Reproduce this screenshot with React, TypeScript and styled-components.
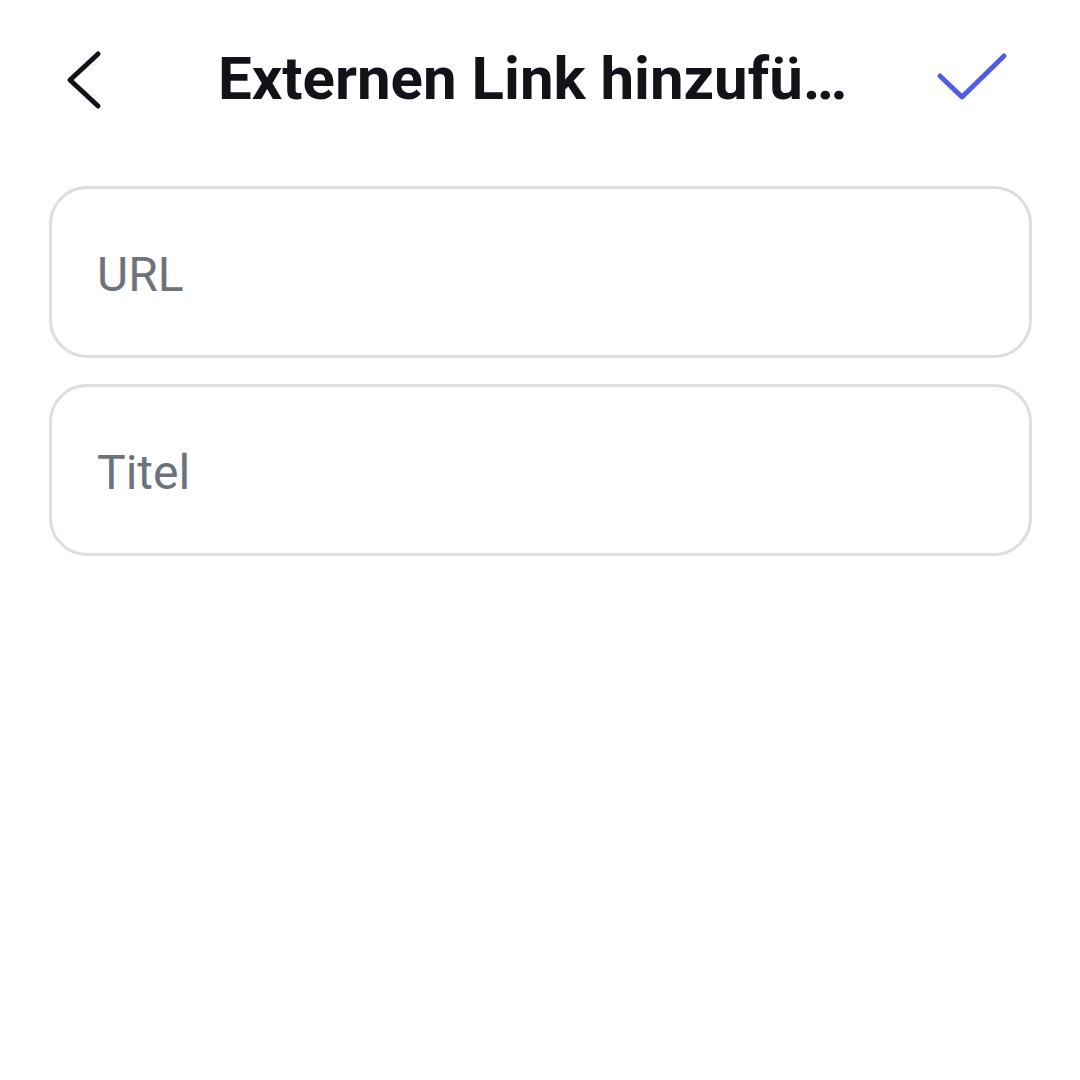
import styled, { createGlobalStyle } from "styled-components";

const Global = createGlobalStyle`
  html, body {
    margin: 0;
    padding: 0;
    background: #ffffff;
  }
  body {
    font-family: Roboto, "Liberation Sans", Arial, sans-serif;
  }
`;

const Screen = styled.div`
  width: 1080px;
  height: 1080px;
  background: #ffffff;
  display: flex;
  flex-direction: column;
`;

const Header = styled.header`
  height: 156px;
  display: grid;
  grid-template-columns: 218px 1fr 218px;
  align-items: center;
`;

const IconButton = styled.button<{ $align: "start" | "end" }>`
  border: none;
  background: none;
  padding: 0;
  display: flex;
  justify-content: ${(p) => (p.$align === "start" ? "flex-start" : "flex-end")};
  padding-left: ${(p) => (p.$align === "start" ? "64px" : "0")};
  padding-right: ${(p) => (p.$align === "end" ? "72px" : "0")};
  padding-top: ${(p) => (p.$align === "start" ? "4px" : "0")};
  align-items: center;
  cursor: pointer;
`;

// the title is cut with an ellipsis, as in the app
const Title = styled.h1`
  margin: 0;
  font-size: 60px;
  font-weight: 700;
  color: #111318;
  text-align: center;
  white-space: nowrap;
  overflow: hidden;
  text-overflow: ellipsis;
`;

const Form = styled.div`
  display: flex;
  flex-direction: column;
  gap: 26px;
  padding: 30px 48px 0 49px;
`;

const Field = styled.input`
  box-sizing: border-box;
  height: 172px;
  width: 100%;
  border: 3px solid #dddee1;
  border-radius: 38px;
  padding: 4px 45px 0;
  font-family: Roboto, "Liberation Sans", Arial, sans-serif;
  font-size: 48px;
  color: #111318;
  background: #ffffff;
  outline: none;
  &::placeholder {
    color: #6d727b;
  }
`;

export default function App() {
  return (
    <Screen>
      <Global />
      <Header>
        <IconButton $align="start" aria-label="Zurück">
          <svg width="40" height="60" viewBox="0 0 40 60">
            <path
              d="M34 4 L6 30 L34 56"
              fill="none"
              stroke="#111318"
              strokeWidth="5"
              strokeLinecap="round"
              strokeLinejoin="round"
            />
          </svg>
        </IconButton>
        <Title>Externen Link hinzufügen</Title>
        <IconButton $align="end" aria-label="Speichern">
          <svg width="72" height="52" viewBox="0 0 72 52">
            <path
              d="M4 24 L26 45 L68 4"
              fill="none"
              stroke="#4f5ee0"
              strokeWidth="5"
              strokeLinecap="round"
              strokeLinejoin="round"
            />
          </svg>
        </IconButton>
      </Header>
      <Form>
        <Field placeholder="URL" />
        <Field placeholder="Titel" />
      </Form>
    </Screen>
  );
}
